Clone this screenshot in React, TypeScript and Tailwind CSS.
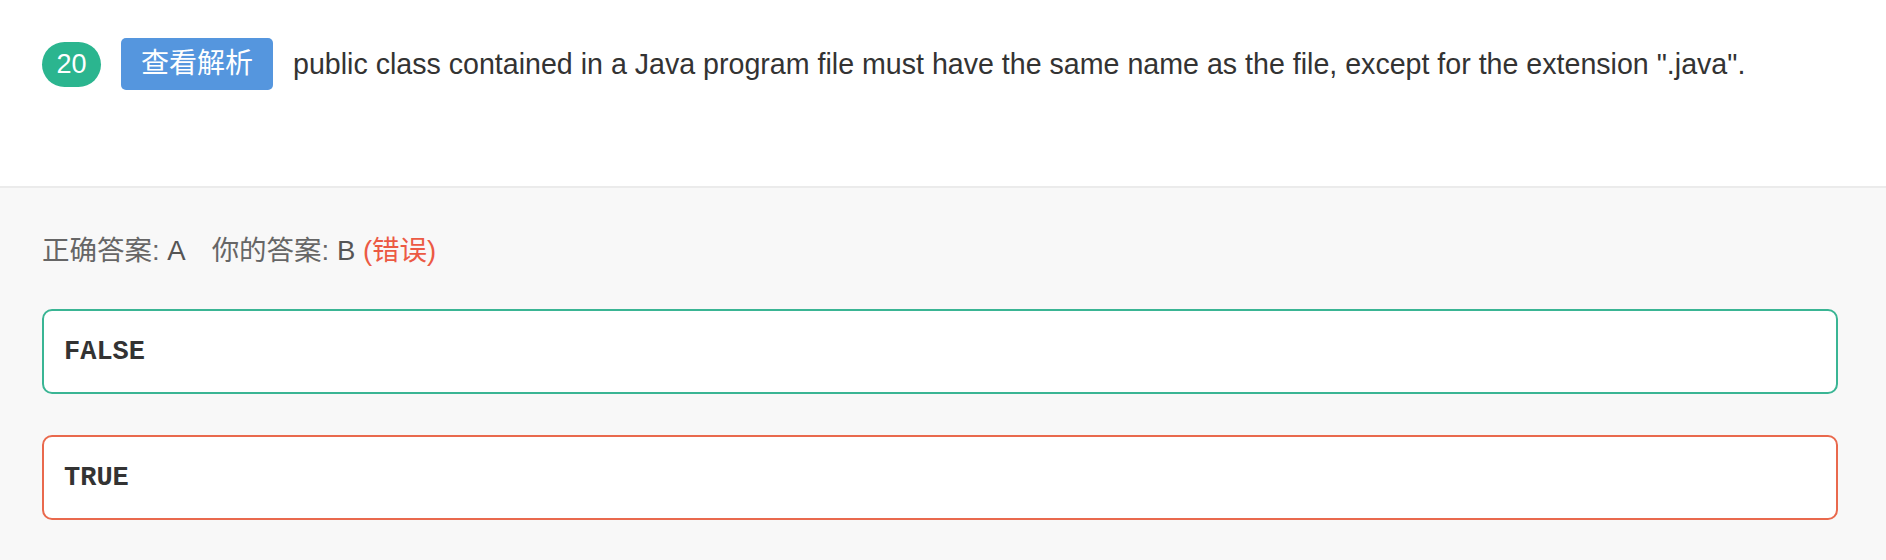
const App = () => {
  return (
    <div className="min-h-screen bg-[#f8f8f8] font-['Liberation_Sans','Noto_Sans_CJK_SC',sans-serif]">
      <section className="h-[188px] border-b-2 border-[#ebebeb] bg-white px-[42px] pt-[38px]">
        <div className="flex items-center">
          <span className="flex h-[45px] w-[59px] items-center justify-center rounded-full bg-[#2bb58f] text-[27px] text-white">
            20
          </span>
          <button className="ml-[20px] flex h-[52px] items-center rounded-[5px] bg-[#5596de] px-[20px] text-[28px] text-white">
            查看解析
          </button>
          <p className="ml-[20px] text-[28.6px] text-[#333]">
            public class contained in a Java program file must have the same name as the file, except for the extension ".java".
          </p>
        </div>
      </section>

      <section className="pt-[42px] pb-[40px] pl-[42px] pr-[48px]">
        <p className="text-[27.5px] text-[#666]">
          正确答案: <span className="text-[#555]">A</span>
          <span className="ml-[26px]">你的答案: </span>
          <span className="text-[#555]">B</span>{' '}
          <span className="text-[#ec5a44]">(错误)</span>
        </p>

        <div className="mt-[38px] space-y-[41px]">
          <div className="flex h-[85px] items-center rounded-[10px] border-2 border-[#3ab594] bg-white px-[20px]">
            <span className="font-['Liberation_Mono',monospace] text-[27px] font-bold text-[#333]">FALSE</span>
          </div>
          <div className="flex h-[85px] items-center rounded-[10px] border-2 border-[#e9694d] bg-white px-[20px]">
            <span className="font-['Liberation_Mono',monospace] text-[27px] font-bold text-[#333]">TRUE</span>
          </div>
        </div>
      </section>
    </div>
  )
}

export default App
